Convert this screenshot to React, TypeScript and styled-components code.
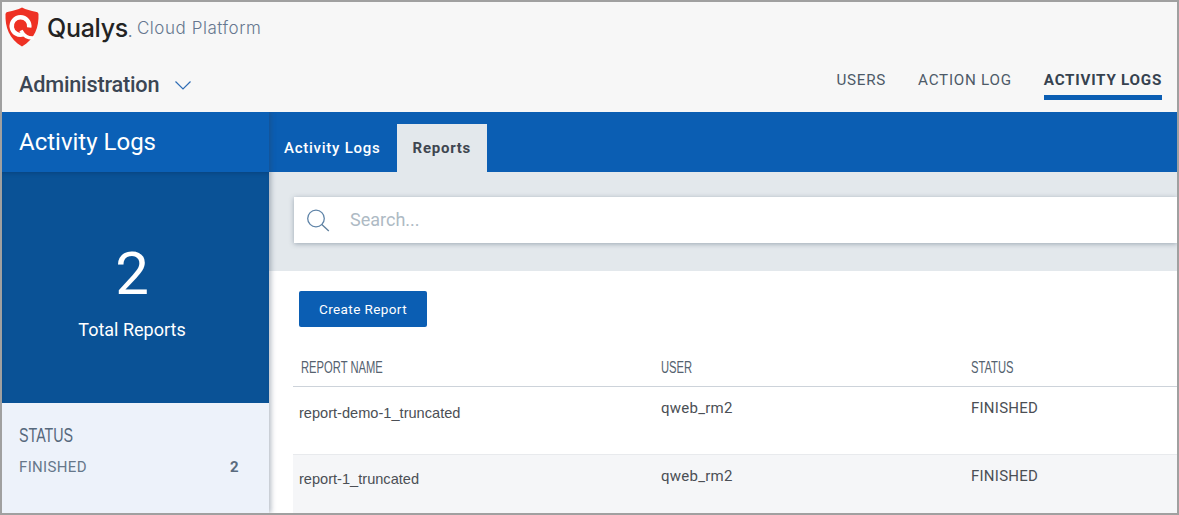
import React from 'react';
import styled, { createGlobalStyle } from 'styled-components';

const GlobalStyle = createGlobalStyle`
    html, body {
        margin: 0;
        padding: 0;
        background: #fff;
    }
`;

const rows = [
    { name: 'report-demo-1_truncated', user: 'qweb_rm2', status: 'FINISHED' },
    { name: 'report-1_truncated', user: 'qweb_rm2', status: 'FINISHED' },
];

const App = () => {
    return (
        <Frame>
            <GlobalStyle />
            <Header>
                <LogoRow>
                    <svg width="34" height="40" viewBox="0 0 34 40">
                        <path d="M0.500 7 C1 5.500 2 5 3.500 4.800 C8 4 13 2.500 17 0.500 C21 2.500 26 4 30.500 4.800 C32 5 33 5.500 33.500 7 C34 20 30 32 17 39.500 C4 32 0 20 0.500 7 Z" fill="#ee3124" />
                        <path d="M18.500 27.300 A8.800 8.800 0 1 1 24.200 20.500" fill="none" stroke="#fff" strokeWidth="4.400" />
                        <path d="M16 23.500 C18.500 28.500 22.500 31.500 29 31" fill="none" stroke="#fff" strokeWidth="3.600" />
                    </svg>
                    <Brand>Qualys<BrandDot>.</BrandDot></Brand>
                    <Product>Cloud Platform</Product>
                </LogoRow>
                <NavRow>
                    <ModuleName>
                        Administration
                        <svg width="16" height="9" viewBox="0 0 16 9">
                            <path d="M0.500 0.500 L8 8 L15.500 0.500" fill="none" stroke="#2f6db5" strokeWidth="1.200" />
                        </svg>
                    </ModuleName>
                    <Nav>
                        <NavItem>USERS</NavItem>
                        <NavItem>ACTION LOG</NavItem>
                        <NavItem $active>ACTIVITY LOGS</NavItem>
                    </Nav>
                </NavRow>
            </Header>
            <Body>
                <Sidebar>
                    <SideTitle>Activity Logs</SideTitle>
                    <TotalPanel>
                        <TotalNumber>2</TotalNumber>
                        <TotalLabel>Total Reports</TotalLabel>
                    </TotalPanel>
                    <StatusPanel>
                        <StatusTitle>STATUS</StatusTitle>
                        <StatusRow>
                            <span>FINISHED</span>
                            <StatusCount>2</StatusCount>
                        </StatusRow>
                    </StatusPanel>
                </Sidebar>
                <Main>
                    <TabBar>
                        <Tab>Activity Logs</Tab>
                        <Tab $active>Reports</Tab>
                    </TabBar>
                    <SearchArea>
                        <SearchBox>
                            <svg width="24" height="23" viewBox="0 0 24 23">
                                <circle cx="10" cy="9.500" r="8.300" fill="none" stroke="#5f84a8" strokeWidth="1.300" />
                                <path d="M15.800 15.500 L22.800 22" fill="none" stroke="#5f7f9c" strokeWidth="1.300" />
                            </svg>
                            <SearchText>Search...</SearchText>
                        </SearchBox>
                    </SearchArea>
                    <Content>
                        <CreateButton>Create Report</CreateButton>
                        <HeadRow>
                            <HeadCell>REPORT NAME</HeadCell>
                            <HeadCell>USER</HeadCell>
                            <HeadCell>STATUS</HeadCell>
                        </HeadRow>
                        {rows.map((row, i) => (
                            <Row key={row.name} $striped={i % 2 === 1}>
                                <NameCell $striped={i % 2 === 1}>{row.name}</NameCell>
                                <Cell>{row.user}</Cell>
                                <Cell>{row.status}</Cell>
                            </Row>
                        ))}
                    </Content>
                </Main>
            </Body>
        </Frame>
    );
};

const Frame = styled.div`
    box-sizing: border-box;
    width: 1179px;
    height: 515px;
    border: 2px solid #a0a0a0;
    overflow: hidden;
    font-family: Roboto, "Liberation Sans", sans-serif;
    display: flex;
    flex-direction: column;
    background: #fff;
`;

const Header = styled.header`
    height: 110px;
    flex: none;
    background: #f7f7f7;
    display: flex;
    flex-direction: column;
`;

const LogoRow = styled.div`
    height: 48px;
    padding: 5px 0 0 3px;
    box-sizing: border-box;
    display: flex;
    align-items: flex-start;

    svg {
        flex: none;
    }
`;

const Brand = styled.span`
    font-family: Inter, sans-serif;
    font-size: 25px;
    font-weight: 500;
    letter-spacing: -0.3px;
    color: #232323;
    margin: 5px 0 0 8px;
    line-height: 32px;
`;

const BrandDot = styled.span`
    font-size: 14px;
    color: #6d7f96;
`;

const Product = styled.span`
    font-family: Inter, sans-serif;
    font-size: 17px;
    font-weight: 300;
    letter-spacing: 0.55px;
    color: #66778f;
    margin: 9px 0 0 5px;
    line-height: 24px;
`;

const NavRow = styled.div`
    flex: 1;
    display: flex;
    justify-content: space-between;
    padding: 0 15px 0 17px;
`;

const ModuleName = styled.div`
    font-size: 21.700px;
    font-weight: 500;
    color: #3b4654;
    line-height: 26px;
    margin-top: 22px;
    height: 26px;
    display: flex;
    align-items: center;
    letter-spacing: -0.2px;

    svg {
        margin-left: 16px;
    }
`;

const Nav = styled.nav`
    display: flex;
    gap: 32px;
    margin-top: 20px;
`;

const NavItem = styled.div<{ $active?: boolean }>`
    height: 30px;
    box-sizing: border-box;
    font-size: 15.200px;
    line-height: 20px;
    letter-spacing: 0.75px;
    font-weight: ${(p) => (p.$active ? 700 : 400)};
    color: ${(p) => (p.$active ? '#36424f' : '#4d5a68')};
    border-bottom: ${(p) => (p.$active ? '5px solid #0b5eb3' : 'none')};
`;

const Body = styled.div`
    flex: 1;
    display: flex;
    min-height: 0;
`;

const Sidebar = styled.aside`
    width: 267px;
    flex: none;
    display: flex;
    flex-direction: column;
    position: relative;
    z-index: 1;
    box-shadow: 2px 0 5px rgba(40, 60, 90, 0.35);
    clip-path: inset(0 -12px 0 0);
`;

const SideTitle = styled.div`
    height: 60px;
    flex: none;
    box-sizing: border-box;
    padding: 15px 0 0 17px;
    background: #0b60b6;
    color: #fff;
    font-size: 24px;
    line-height: 30px;
`;

const TotalPanel = styled.div`
    height: 231px;
    flex: none;
    box-sizing: border-box;
    padding-right: 7px;
    background: #0a5296;
    box-shadow: inset 0 3px 4px -2px rgba(0, 20, 50, 0.25);
    color: #fff;
    display: flex;
    flex-direction: column;
    align-items: center;
`;

const TotalNumber = styled.div`
    font-size: 60px;
    line-height: 72px;
    margin-top: 66px;
`;

const TotalLabel = styled.div`
    font-size: 18px;
    line-height: 22px;
    margin-top: 9px;
`;

const StatusPanel = styled.div`
    flex: 1;
    background: #edf2fa;
    padding: 20px 30px 0 17px;
`;

// no Oswald here, so the narrow headings are squeezed
const StatusTitle = styled.div`
    font-family: "Liberation Sans", sans-serif;
    font-size: 19.500px;
    line-height: 24px;
    color: #56687c;
    transform: scaleX(0.73);
    transform-origin: left center;
`;

const StatusRow = styled.div`
    display: flex;
    justify-content: space-between;
    font-size: 15px;
    line-height: 18px;
    letter-spacing: 0.35px;
    color: #66778a;
    margin-top: 11px;
`;

const StatusCount = styled.span`
    font-weight: 700;
    color: #5a6b7e;
`;

const Main = styled.main`
    flex: 1;
    min-width: 0;
    display: flex;
    flex-direction: column;
`;

const TabBar = styled.div`
    height: 60px;
    flex: none;
    background: #0b5eb3;
    display: flex;
    align-items: flex-end;
`;

const Tab = styled.div<{ $active?: boolean }>`
    height: 48px;
    box-sizing: border-box;
    padding: 0 16px 0 ${(p) => (p.$active ? '16px' : '15px')};
    display: flex;
    align-items: center;
    font-size: 15px;
    letter-spacing: 0.75px;
    font-weight: ${(p) => (p.$active ? 700 : 500)};
    color: ${(p) => (p.$active ? '#3f4650' : '#fff')};
    background: ${(p) => (p.$active ? '#e3e8ec' : 'transparent')};
`;

const SearchArea = styled.div`
    height: 99px;
    flex: none;
    box-sizing: border-box;
    background: #e3e8ec;
    padding: 25px 0 0 25px;
`;

const SearchBox = styled.div`
    height: 46px;
    background: #fff;
    box-shadow: 0 1px 5px rgba(70, 90, 110, 0.45);
    display: flex;
    align-items: center;
    padding-left: 12px;
`;

const SearchText = styled.span`
    font-size: 18px;
    color: #aebac4;
    margin: 0 0 2px 20px;
`;

const Content = styled.div`
    flex: 1;
    background: #fff;
    padding: 20px 0 0 24px;
`;

const CreateButton = styled.button`
    display: block;
    width: 128px;
    height: 36px;
    margin-left: 6px;
    border: none;
    border-radius: 2px;
    background: #0b5eb3;
    color: #fff;
    font-family: Roboto, sans-serif;
    font-size: 13.500px;
    font-weight: 400;
    letter-spacing: 0.4px;
`;

const columns = '360px 310px 1fr';

const HeadRow = styled.div`
    display: grid;
    grid-template-columns: ${columns};
    height: 41px;
    margin-top: 19px;
    padding-left: 8px;
    box-sizing: border-box;
    border-bottom: 1px solid #cdd3da;
    align-items: center;
`;

const HeadCell = styled.div`
    font-family: "Liberation Sans", sans-serif;
    font-size: 16px;
    color: #55626f;
    padding-top: 4px;
    transform: scaleX(0.7);
    transform-origin: left center;
`;

const Row = styled.div<{ $striped?: boolean }>`
    display: grid;
    grid-template-columns: ${columns};
    height: 68px;
    padding-left: 6px;
    box-sizing: border-box;
    border-bottom: 1px solid #e8eaed;
    background: ${(p) => (p.$striped ? '#f5f6f8' : '#fff')};
`;

const Cell = styled.div`
    font-size: 15px;
    line-height: 18px;
    letter-spacing: 0.25px;
    color: #4b4f55;
    padding: 12px 0 0 2px;
`;

const NameCell = styled(Cell)<{ $striped?: boolean }>`
    font-family: "Liberation Sans", sans-serif;
    font-size: 14.600px;
    letter-spacing: 0;
    padding: ${(p) => (p.$striped ? '15px' : '17px')} 0 0;
`;

export default App;
